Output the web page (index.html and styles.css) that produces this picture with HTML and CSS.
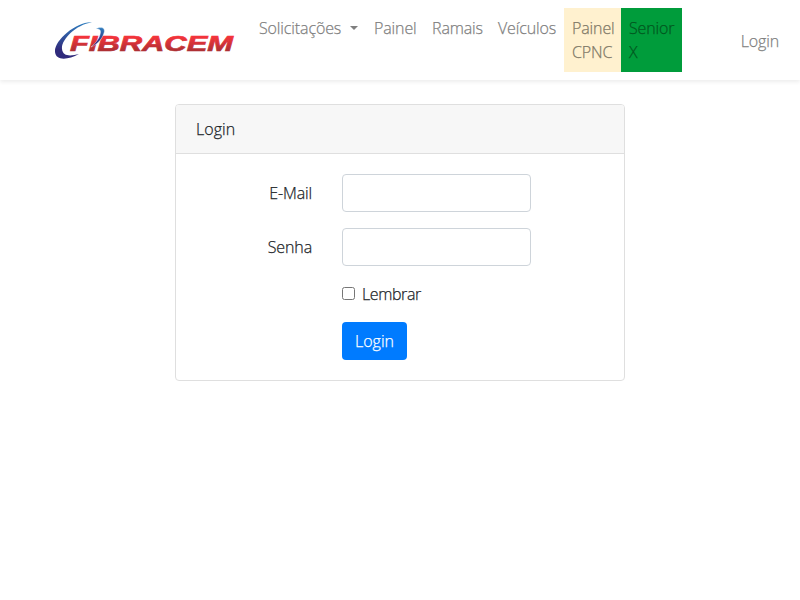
FILE: index.html
```html
<!DOCTYPE html>
<html lang="pt-BR">
<head>
<meta charset="utf-8">
<title>Fibracem</title>
<link rel="stylesheet" href="styles.css">
</head>
<body>
<nav class="navbar">
  <a class="brand" href="#">
    <svg width="184" height="40" viewBox="0 0 184 40" role="img" aria-label="Fibracem">
      <defs>
        <linearGradient id="red" x1="0" y1="0" x2="0" y2="1"><stop offset="0.25" stop-color="#f4343b"/><stop offset="0.8" stop-color="#ae3034"/></linearGradient>
        <linearGradient id="blue" x1="0" y1="0" x2="0" y2="1"><stop offset="0" stop-color="#2f7fc0"/><stop offset="0.75" stop-color="#302b7c"/></linearGradient>
      </defs>
      <text class="wordmark" x="17" y="30.700" textLength="163" lengthAdjust="spacingAndGlyphs" fill="url(#red)" stroke="url(#red)">FIBRACEM</text>
      <path d="M39 2.2C24 1 1 20 2 32C3 41 15 40 26 34C18 36 10 37 9 29C8 20 22 5 39 2.2Z" fill="url(#blue)"/>
      <path d="M43 9C48 6 53 8 51 13C49 20 43 25 38 27C44 22 47 17 47.500 12C47.500 9.500 46 9 43 9Z" fill="url(#blue)" stroke="#fff" stroke-width="0.400"/>
    </svg>
  </a>
  <ul class="links">
    <li class="w-requests"><a href="#">Solicitações<span class="caret"></span></a></li>
    <li class="w-panel"><a href="#">Painel</a></li>
    <li class="w-phones"><a href="#">Ramais</a></li>
    <li class="w-vehicles"><a href="#">Veículos</a></li>
    <li class="w-cpnc"><a href="#">Painel CPNC</a></li>
    <li class="w-senior"><a href="#">Senior X</a></li>
  </ul>
  <a class="login-link" href="#">Login</a>
</nav>
<main class="card">
  <div class="card-header">Login</div>
  <form class="card-body">
    <label class="label" for="email">E-Mail</label>
    <input class="control" id="email" type="email">
    <label class="label" for="password">Senha</label>
    <input class="control" id="password" type="password">
    <label class="remember"><input type="checkbox"><span>Lembrar</span></label>
    <button class="button" type="button">Login</button>
  </form>
</main>
</body>
</html>
```
FILE: styles.css
```css
* { box-sizing: border-box; }
body {
  margin: 0;
  background: #fff;
  color: #212529;
  font: 300 16px/24px "Segoe UI", "Open Sans", "Noto Sans", sans-serif;
  letter-spacing: -0.12px;
  -webkit-text-stroke: 0.25px currentColor;
}
a { color: inherit; text-decoration: none; }
.navbar {
  display: flex;
  align-items: center;
  height: 80px;
  padding: 8px 21px 8px 53px;
  box-shadow: 0 2px 4px rgba(0, 0, 0, 0.075);
  color: #7f7f7f;
}
.brand { width: 198px; height: 40px; }
.brand svg { display: block; }
.wordmark {
  font: italic 700 22.5px "Liberation Sans", sans-serif;
  letter-spacing: 0;
  -webkit-text-stroke: 0;
  stroke-width: 0.7px;
}
.links {
  display: flex;
  height: 64px;
  margin: 0;
  padding: 0;
  list-style: none;
}
.links li { padding: 8px 0 8px 8px; }
.w-requests { width: 115px; white-space: nowrap; }
.w-panel { width: 58px; }
.w-phones { width: 66px; }
.w-vehicles { width: 74px; }
.w-cpnc { width: 57px; background: #fff1cf; color: #807967; }
.w-senior { width: 61px; background: #009c3b; color: #00581f; }
.caret {
  display: inline-block;
  margin-left: 9px;
  vertical-align: 4px;
  border: 4px solid transparent;
  border-top-color: currentColor;
  border-bottom: 0;
}
.login-link { margin-left: auto; padding-top: 1px; }
.card {
  width: 450px;
  margin: 24px auto 0;
  border: 1px solid #dfdfdf;
  border-radius: 4px;
}
.card-header {
  height: 49px;
  padding: 12px 20px;
  background: #f7f7f7;
  border-bottom: 1px solid #dfdfdf;
  border-radius: 3px 3px 0 0;
  letter-spacing: 0.05px;
}
.card-body {
  display: grid;
  grid-template-columns: 116px 189px;
  grid-template-rows: 38px 38px 24px 38px;
  column-gap: 30px;
  row-gap: 16px;
  height: 226px;
  padding: 20px;
}
.label { padding-top: 7px; text-align: right; }
.control {
  width: 189px;
  height: 38px;
  padding: 6px 12px;
  border: 1px solid #ced4da;
  border-radius: 4px;
  background: #fff;
  font: inherit;
}
.remember {
  grid-column: 2;
  display: flex;
  align-items: flex-start;
}
.remember input { width: 13px; height: 13px; margin: 5px 7px 0 0; }
.remember span { letter-spacing: -0.4px; }
.button {
  grid-column: 2;
  width: 65px;
  height: 38px;
  padding: 0;
  border: 0;
  border-radius: 4px;
  background: #007bff;
  color: #fff;
  font: inherit;
  letter-spacing: 0.05px;
}
```
